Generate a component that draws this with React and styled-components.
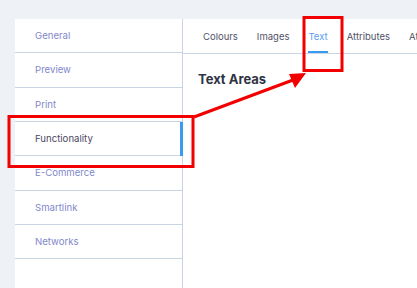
import React from "react";
import styled, { createGlobalStyle } from "styled-components";

// --------------------------------------------------

const Global = createGlobalStyle`
	html, body {
		margin: 0;
		padding: 0;
		background: #eef1f5;
		font-family: Inter, "Open Sans", sans-serif;
	}
`;

const Page = styled.div`
	position: relative;
	width: 417px;
	height: 288px;
	overflow: hidden;
	padding: 19px 0 0 15px;
	box-sizing: border-box;
	display: flex;
`;

const Sidebar = styled.nav`
	width: 168px;
	flex-shrink: 0;
	background: #fff;
	border-right: 1px solid #c9d4e2;
	box-sizing: border-box;
	display: flex;
	flex-direction: column;
`;

const NavItem = styled.div`
	position: relative;
	height: 34.33px;
	flex-shrink: 0;
	box-sizing: border-box;
	border-bottom: 1px solid #c9d4e2;
	display: flex;
	align-items: center;
	padding-left: 20px;
	font-size: 9.6px;
	color: ${({ active }) => active ? "#4b4763" : "#8288cc"};

	&:after {
		content: '';
		display: ${({ active }) => active ? "block" : "none"};
		position: absolute;
		right: -1px;
		top: 0;
		bottom: -1px;
		width: 3px;
		background: #3a9bf2;
	}
`;

const Main = styled.main`
	flex: 1;
	min-width: 0;
	background: #fff;
	display: flex;
	flex-direction: column;
`;

const Tabs = styled.div`
	height: 35px;
	box-sizing: border-box;
	border-bottom: 1px solid #c9d4e2;
	display: flex;
	align-items: stretch;
	gap: 19px;
	padding-left: 20px;
	white-space: nowrap;
	overflow: hidden;
`;

const Tab = styled.div`
	position: relative;
	display: flex;
	align-items: center;
	font-size: 9.5px;
	color: ${({ active }) => active ? "#5b9cf3" : "#4f5268"};

	&:after {
		content: '';
		display: ${({ active }) => active ? "block" : "none"};
		position: absolute;
		left: 0;
		right: 0;
		bottom: 0;
		height: 2px;
		background: #3a9bf2;
	}
`;

const Content = styled.section`
	padding: 17px 15px;
`;

const Heading = styled.h2`
	margin: 0;
	font-size: 13px;
	font-weight: 700;
	color: #2f3444;
`;

const Annotations = styled.svg`
	position: absolute;
	left: 0;
	top: 0;
	pointer-events: none;
`;

// --------------------------------------------------

const navItems = [ "General", "Preview", "Print", "Functionality", "E-Commerce", "Smartlink", "Networks", ];
const tabs = [ "Colours", "Images", "Text", "Attributes", "Attachments", ];

const App = () => (
	<Page>
		<Global />
		<Sidebar>
			{ navItems.map(item =>
				<NavItem key = { item } active = { item === "Functionality" }>{ item }</NavItem>
			) }
		</Sidebar>
		<Main>
			<Tabs>
				{ tabs.map(tab =>
					<Tab key = { tab } active = { tab === "Text" }>{ tab }</Tab>
				) }
			</Tabs>
			<Content>
				<Heading>Text Areas</Heading>
			</Content>
		</Main>

		<Annotations width = "417" height = "288" viewBox = "0 0 417 288">
			<g fill = "none" stroke = "#f20000" strokeWidth = "3">
				<rect x = "9" y = "116.5" width = "184" height = "50" />
				<rect x = "304" y = "17.5" width = "38" height = "53" />
				<line x1 = "194" y1 = "117" x2 = "293" y2 = "80" />
			</g>
			<polygon points = "306,73 289,74 295,88" fill = "#f20000" />
		</Annotations>
	</Page>
);

export default App;
